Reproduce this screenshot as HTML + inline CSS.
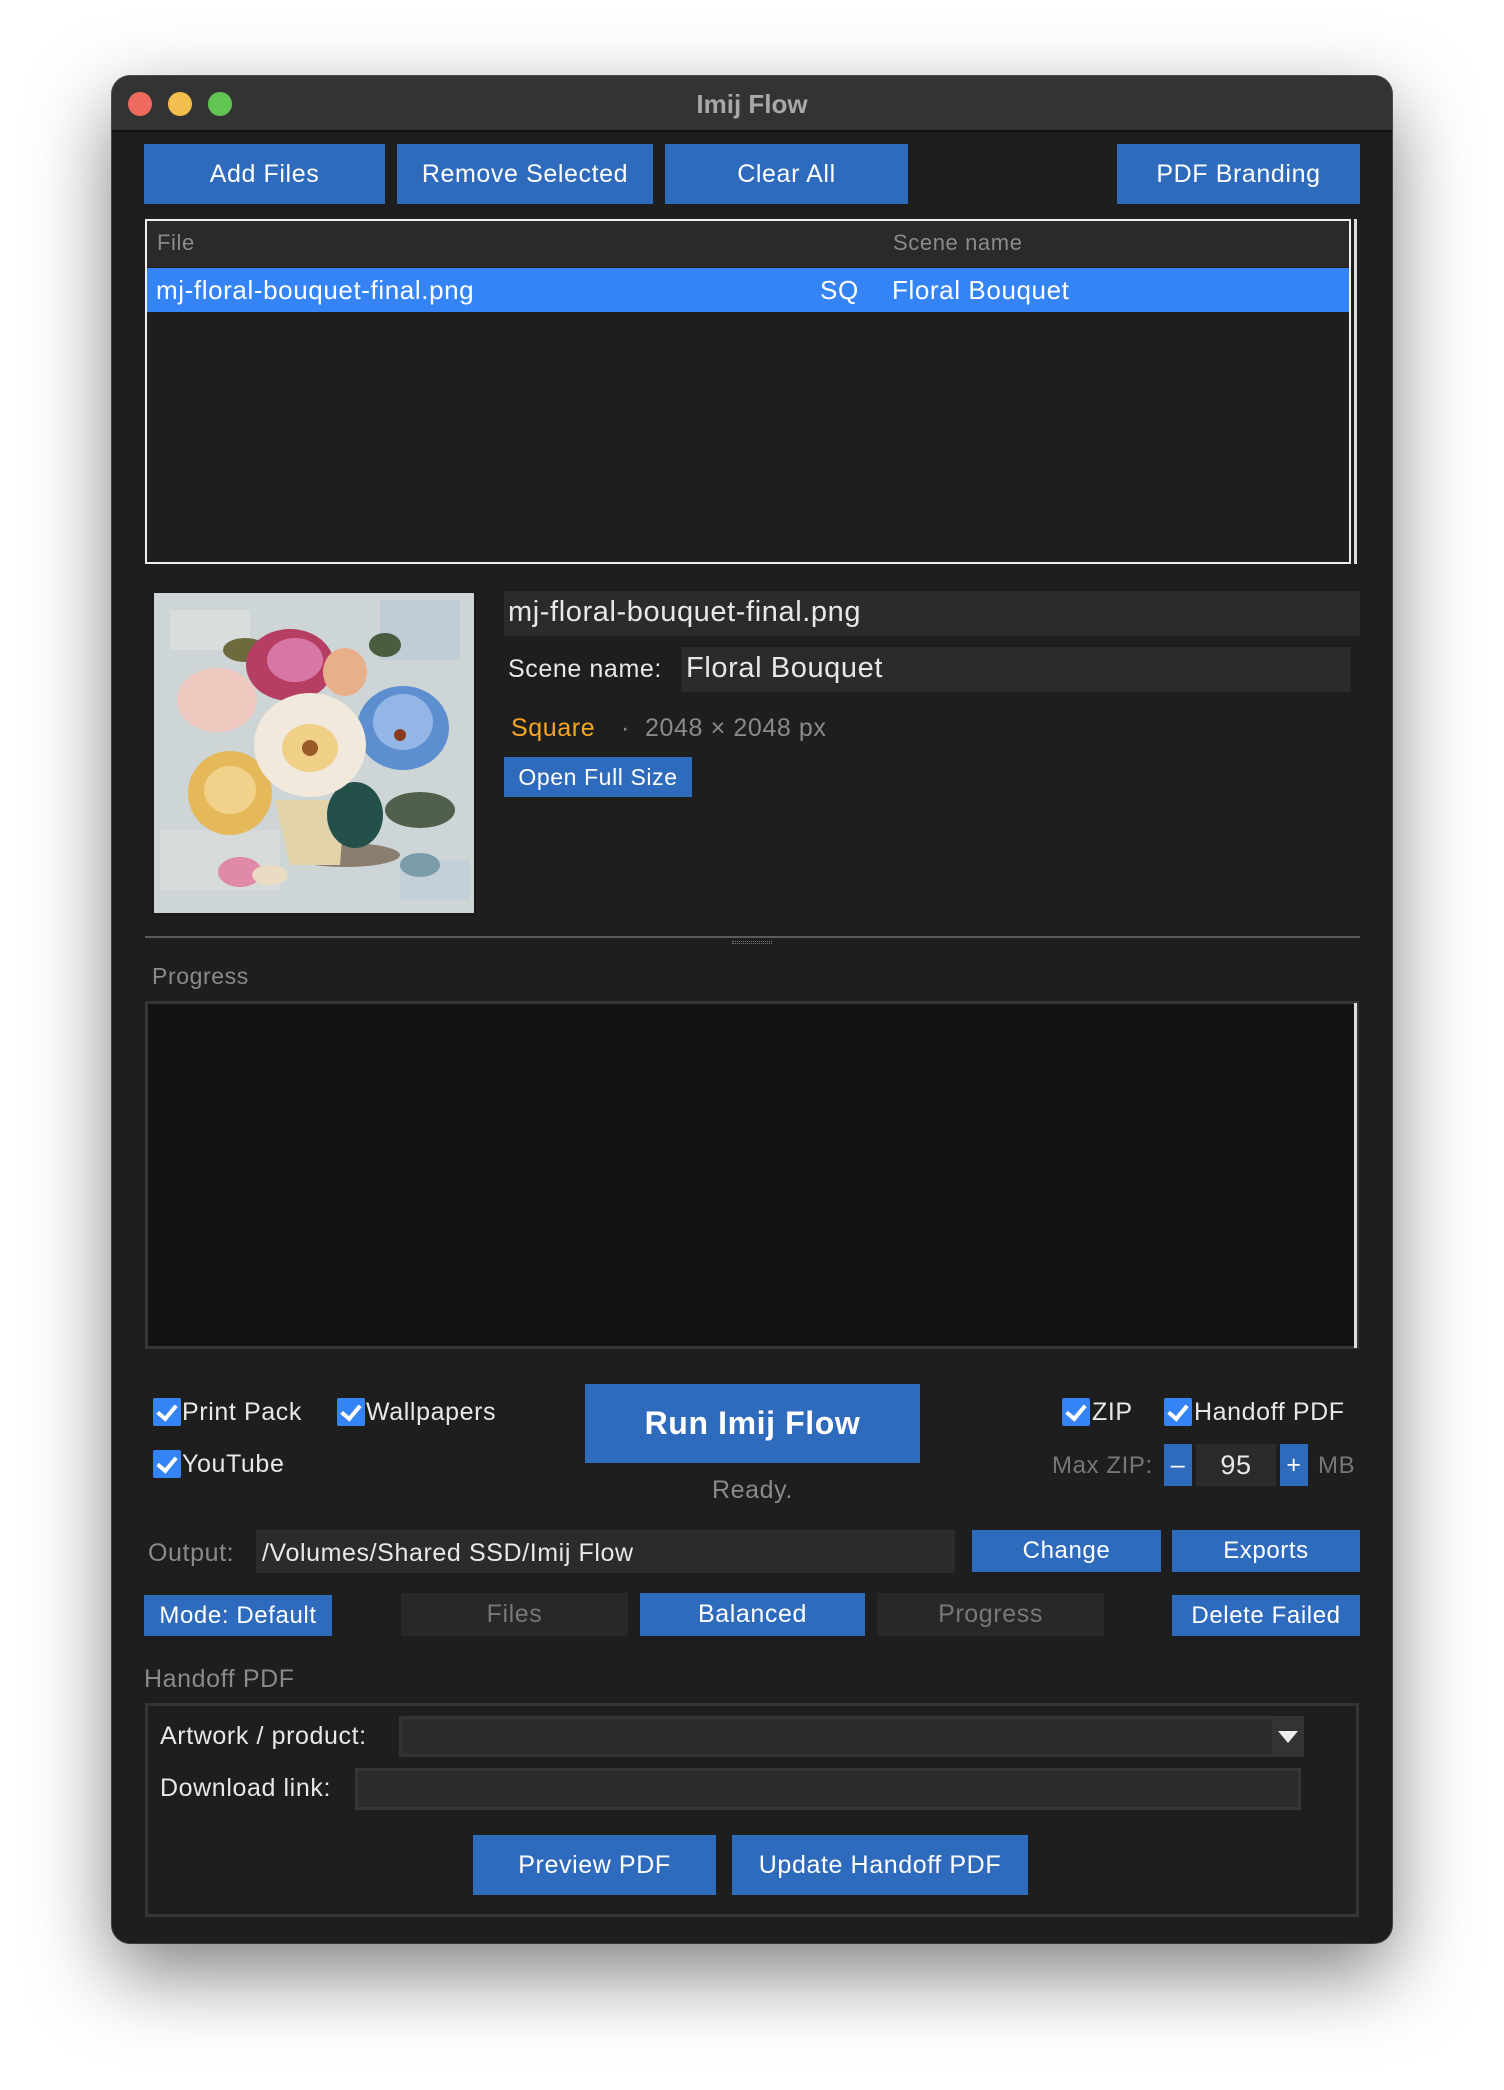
<!DOCTYPE html>
<html><head><meta charset="utf-8"><style>
*{box-sizing:border-box;margin:0;padding:0}
body{width:1504px;height:2090px;background:#ffffff;position:relative;overflow:hidden;font-family:"Liberation Sans",sans-serif;color:#e8e8e8}
.a{position:absolute}
.win{left:112px;top:76px;width:1280px;height:1867px;background:#1e1e1e;border-radius:18px;box-shadow:0 30px 80px rgba(0,0,0,.5),0 0 0 1px #555;overflow:hidden}
.tb{left:0;top:0;width:1280px;height:56px;background:#333;border-bottom:2px solid #111}
.dot{width:24px;height:24px;border-radius:50%;top:16px}
.btn{background:#2f6bbd;color:#fff;font-size:25px;display:flex;align-items:center;justify-content:center;letter-spacing:.6px}
.gbtn{background:#282828;color:#777;font-size:25px;display:flex;align-items:center;justify-content:center;letter-spacing:.6px}
.t{font-size:25px;white-space:nowrap;line-height:1;letter-spacing:.6px}
.fld{background:#2b2b2b}
.cb{width:28px;height:28px;background:#3584f6;border-radius:2px}
.cb:after{content:"";position:absolute;left:8px;top:3px;width:8px;height:15px;border:solid #fff;border-width:0 4px 4px 0;transform:rotate(40deg)}
.g{color:#8a8a8a}
</style></head><body>
<div class="a win">
 <div class="a tb"></div>
 <div class="a dot" style="left:16px;background:#ee6a5e"></div>
 <div class="a dot" style="left:56px;background:#f5bf4f"></div>
 <div class="a dot" style="left:96px;background:#61c554"></div>
 <div class="a t" style="left:0;width:1280px;text-align:center;top:15px;font-weight:bold;color:#a8a8a8;font-size:26px;letter-spacing:0">Imij Flow</div>
</div>
<div class="a btn" style="left:144px;top:144px;width:241px;height:60px">Add Files</div>
<div class="a btn" style="left:397px;top:144px;width:256px;height:60px">Remove Selected</div>
<div class="a btn" style="left:665px;top:144px;width:243px;height:60px">Clear All</div>
<div class="a btn" style="left:1117px;top:144px;width:243px;height:60px">PDF Branding</div>
<div class="a" style="left:145px;top:219px;width:1206px;height:345px;border:2px solid #eee;background:#1e1e1e"></div>
<div class="a" style="left:147px;top:221px;width:1202px;height:46px;background:#2a2a2a"></div>
<div class="a t g" style="left:157px;top:232px;font-size:22px">File</div>
<div class="a t g" style="left:893px;top:232px;font-size:22px">Scene name</div>
<div class="a" style="left:147px;top:268px;width:1202px;height:44px;background:#3584f6"></div>
<div class="a t" style="left:156px;top:277px;color:#fff;font-size:26px">mj-floral-bouquet-final.png</div>
<div class="a t" style="left:820px;top:277px;color:#fff;font-size:26px">SQ</div>
<div class="a t" style="left:892px;top:277px;color:#fff;font-size:26px">Floral Bouquet</div>
<div class="a" style="left:1354px;top:219px;width:3px;height:345px;background:#ddd"></div>
<svg class="a" style="left:152px;top:591px" width="324" height="324" viewBox="152 591 324 324">
<rect x="152" y="591" width="324" height="324" fill="#1a1a1a"/>
<rect x="154" y="593" width="320" height="320" fill="#cdd5d6"/>
<rect x="170" y="610" width="80" height="40" fill="#d9dedc"/><rect x="380" y="600" width="80" height="60" fill="#c0cdd6"/>
<rect x="160" y="830" width="120" height="60" fill="#d6dad8"/><rect x="400" y="860" width="70" height="40" fill="#c3d0d8"/>
<ellipse cx="345" cy="855" rx="55" ry="12" fill="#8a7e70"/>
<path d="M275 800 L345 800 L340 865 L290 865 Z" fill="#e2d4a8"/>
<ellipse cx="355" cy="815" rx="28" ry="33" fill="#24504a"/>
<ellipse cx="420" cy="810" rx="35" ry="18" fill="#505e4c"/>
<ellipse cx="245" cy="650" rx="22" ry="12" fill="#6d6b3e"/>
<ellipse cx="385" cy="645" rx="16" ry="12" fill="#4a5d40"/>
<ellipse cx="290" cy="665" rx="44" ry="36" fill="#b53e62"/>
<ellipse cx="295" cy="660" rx="28" ry="22" fill="#d877a6"/>
<ellipse cx="345" cy="672" rx="22" ry="24" fill="#e8b08a"/>
<ellipse cx="217" cy="700" rx="40" ry="32" fill="#efc9c0"/>
<ellipse cx="403" cy="728" rx="46" ry="42" fill="#5d8fd0"/>
<ellipse cx="403" cy="722" rx="30" ry="28" fill="#93b6e6"/>
<circle cx="400" cy="735" r="6" fill="#8a3a20"/>
<ellipse cx="230" cy="793" rx="42" ry="42" fill="#e5b85a"/>
<ellipse cx="230" cy="790" rx="26" ry="24" fill="#f2d28a"/>
<ellipse cx="310" cy="745" rx="56" ry="52" fill="#f1e9dc"/>
<ellipse cx="310" cy="748" rx="28" ry="24" fill="#f0cf86"/>
<circle cx="310" cy="748" r="8" fill="#9a5a2a"/>
<ellipse cx="240" cy="872" rx="22" ry="15" fill="#e089a8"/>
<ellipse cx="270" cy="875" rx="18" ry="10" fill="#e9dcc2"/>
<ellipse cx="420" cy="865" rx="20" ry="12" fill="#7d9cab"/>
</svg>
<div class="a fld" style="left:504px;top:591px;width:856px;height:45px"></div>
<div class="a t" style="left:508px;top:598px;font-size:29px">mj-floral-bouquet-final.png</div>
<div class="a t" style="left:508px;top:657px">Scene name:</div>
<div class="a fld" style="left:681px;top:647px;width:670px;height:45px"></div>
<div class="a t" style="left:686px;top:654px;font-size:29px">Floral Bouquet</div>
<div class="a t" style="left:511px;top:716px;color:#f5a623">Square</div>
<div class="a t g" style="left:621px;top:716px">·&nbsp; 2048 × 2048 px</div>
<div class="a btn" style="left:504px;top:757px;width:188px;height:40px;font-size:23px">Open Full Size</div>
<div class="a" style="left:145px;top:936px;width:1215px;height:2px;background:#5a5a5a"></div>
<div class="a" style="left:732px;top:941px;width:40px;height:3px;border-top:1px dotted #777;border-bottom:1px dotted #777"></div>
<div class="a t g" style="left:152px;top:965px;font-size:23px">Progress</div>
<div class="a" style="left:145px;top:1001px;width:1214px;height:348px;background:#131313;border:3px solid #353535"></div>
<div class="a" style="left:1354px;top:1003px;width:3px;height:345px;background:#ddd"></div>
<div class="a cb" style="left:153px;top:1398px"></div><div class="a t" style="left:182px;top:1400px">Print Pack</div>
<div class="a cb" style="left:337px;top:1398px"></div><div class="a t" style="left:366px;top:1400px">Wallpapers</div>
<div class="a cb" style="left:153px;top:1450px"></div><div class="a t" style="left:182px;top:1452px">YouTube</div>
<div class="a btn" style="left:585px;top:1384px;width:335px;height:79px;font-size:32px;font-weight:bold">Run Imij Flow</div>
<div class="a t g" style="left:585px;width:335px;text-align:center;top:1478px">Ready.</div>
<div class="a cb" style="left:1062px;top:1398px"></div><div class="a t" style="left:1092px;top:1400px">ZIP</div>
<div class="a cb" style="left:1164px;top:1398px"></div><div class="a t" style="left:1194px;top:1400px">Handoff PDF</div>
<div class="a t" style="left:1052px;top:1454px;color:#777;font-size:24px">Max ZIP:</div>
<div class="a btn" style="left:1164px;top:1444px;width:28px;height:42px">–</div>
<div class="a fld" style="left:1196px;top:1444px;width:80px;height:42px"></div>
<div class="a t" style="left:1196px;width:80px;text-align:center;top:1452px;font-size:27px">95</div>
<div class="a btn" style="left:1280px;top:1444px;width:28px;height:42px">+</div>
<div class="a t" style="left:1318px;top:1454px;color:#777;font-size:24px">MB</div>
<div class="a t g" style="left:148px;top:1541px">Output:</div>
<div class="a fld" style="left:256px;top:1530px;width:699px;height:43px"></div>
<div class="a t" style="left:262px;top:1541px">/Volumes/Shared SSD/Imij Flow</div>
<div class="a btn" style="left:972px;top:1530px;width:189px;height:42px;font-size:24px">Change</div>
<div class="a btn" style="left:1172px;top:1530px;width:188px;height:42px;font-size:24px">Exports</div>
<div class="a btn" style="left:144px;top:1595px;width:188px;height:41px;font-size:24px">Mode: Default</div>
<div class="a gbtn" style="left:401px;top:1593px;width:227px;height:43px">Files</div>
<div class="a btn" style="left:640px;top:1593px;width:225px;height:43px">Balanced</div>
<div class="a gbtn" style="left:877px;top:1593px;width:227px;height:43px">Progress</div>
<div class="a btn" style="left:1172px;top:1595px;width:188px;height:41px;font-size:24px">Delete Failed</div>
<div class="a t g" style="left:144px;top:1667px">Handoff PDF</div>
<div class="a" style="left:145px;top:1703px;width:1214px;height:214px;border:3px solid #353535"></div>
<div class="a t" style="left:160px;top:1724px">Artwork / product:</div>
<div class="a" style="left:399px;top:1716px;width:905px;height:41px;background:#333"></div>
<div class="a fld" style="left:402px;top:1719px;width:870px;height:35px"></div>
<div class="a" style="left:1278px;top:1731px;width:0;height:0;border-left:10px solid transparent;border-right:10px solid transparent;border-top:12px solid #eee"></div>
<div class="a t" style="left:160px;top:1776px">Download link:</div>
<div class="a" style="left:355px;top:1768px;width:946px;height:42px;background:#2b2b2b;border:3px solid #353535"></div>
<div class="a btn" style="left:473px;top:1835px;width:243px;height:60px">Preview PDF</div>
<div class="a btn" style="left:732px;top:1835px;width:296px;height:60px">Update Handoff PDF</div>
</body></html>
